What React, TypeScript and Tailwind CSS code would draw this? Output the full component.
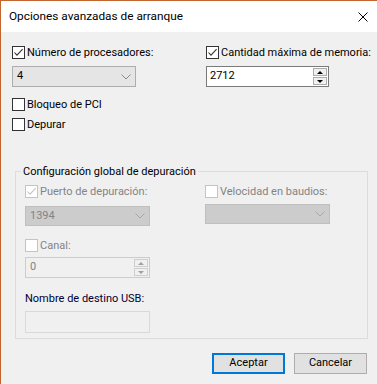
import React from 'react';

const font = { fontFamily: 'Roboto, "Liberation Sans", sans-serif' };

const Check: React.FC<{ checked?: boolean; disabled?: boolean }> = ({ checked, disabled }) => (
  <span
    className={`w-[13px] h-[13px] shrink-0 border bg-white flex items-center justify-center ${
      disabled ? 'border-[#c4c4c4]' : 'border-[#333333]'
    }`}
  >
    {checked && (
      <svg width="11" height="11" viewBox="0 0 11 11">
        <path d="M1.5 5.5 L4 8.2 L9.6 2.2" fill="none" stroke={disabled ? '#c4c4c4' : '#333333'} strokeWidth="1.1" />
      </svg>
    )}
  </span>
);

const CheckRow: React.FC<{ label: string; checked?: boolean; disabled?: boolean; className?: string }> = ({
  label,
  checked,
  disabled,
  className = ''
}) => (
  <div className={`flex items-center gap-[2px] h-[13px] ${className}`}>
    <Check checked={checked} disabled={disabled} />
    <span className={`text-[11px] leading-[13px] whitespace-nowrap ${disabled ? 'text-[#838383]' : 'text-black'}`}>{label}</span>
  </div>
);

const Chevron: React.FC<{ color: string }> = ({ color }) => (
  <svg width="10" height="6" viewBox="0 0 10 6">
    <path d="M0.5 0.5 L5 5 L9.5 0.5" fill="none" stroke={color} strokeWidth="1" />
  </svg>
);

const Spinner: React.FC<{ disabled?: boolean }> = ({ disabled }) => {
  const c = disabled ? '#a0a0a0' : '#000000';
  const b = disabled ? 'border-[#cfcfcf] bg-[#f0f0f0]' : 'border-[#acacac] bg-[#f0f0f0]';
  return (
    <div className="flex flex-col gap-[1px] py-[1px] pr-[1px]">
      <div className={`w-[14px] h-[8px] border ${b} flex items-center justify-center`}>
        <svg width="6" height="3" viewBox="0 0 6 3"><path d="M0 3 L3 0 L6 3 Z" fill={c} /></svg>
      </div>
      <div className={`w-[14px] h-[8px] border ${b} flex items-center justify-center`}>
        <svg width="6" height="3" viewBox="0 0 6 3"><path d="M0 0 L6 0 L3 3 Z" fill={c} /></svg>
      </div>
    </div>
  );
};

export default function App() {
  return (
    <div style={font} className="w-[377px] h-[384px] bg-[#f0f0f0] border-l border-t border-[#c4652f] flex flex-col overflow-hidden">
      <div className="h-[31px] bg-white flex items-center justify-between pl-[8px] pr-[9px] shrink-0">
        <span className="text-[11.8px] text-black">Opciones avanzadas de arranque</span>
        <svg width="10" height="10" viewBox="0 0 10 10">
          <path d="M0.5 0.5 L9.5 9.5 M9.5 0.5 L0.5 9.5" stroke="#000" strokeWidth="1" />
        </svg>
      </div>

      <div className="flex flex-col pl-[11px] pt-[14px]">
        <div className="flex">
          <div className="w-[194px] flex flex-col">
            <CheckRow label="Número de procesadores:" checked />
            <div className="mt-[7px] w-[124px] h-[21px] border border-[#adadad] bg-[#e5e5e5] flex items-center justify-between pl-[4px] pr-[4px]">
              <span className="text-[11px] text-black">4</span>
              <Chevron color="#8a8a8a" />
            </div>
          </div>
          <div className="flex flex-col">
            <CheckRow label="Cantidad máxima de memoria:" checked />
            <div className="mt-[7px] w-[123px] h-[21px] border border-[#7a7a7a] bg-white flex items-center justify-between pl-[3px]">
              <span className="text-[11px] text-black">2712</span>
              <Spinner />
            </div>
          </div>
        </div>

        <CheckRow label="Bloqueo de PCI" className="mt-[11px]" />
        <CheckRow label="Depurar" className="mt-[7px]" />

        <fieldset className="mt-[33px] ml-[3px] w-[353px] h-[175px] border border-[#dcdcdc] pl-[9px]">
          <legend className="ml-[-4px] px-[2px] text-[11px] leading-[15px] text-black">Configuración global de depuración</legend>
          <div className="flex mt-[6px]">
            <div className="w-[180px] flex flex-col">
              <CheckRow label="Puerto de depuración:" checked disabled />
              <div className="mt-[8px] w-[125px] h-[20px] border border-[#bfbfbf] bg-[#cccccc] flex items-center justify-between pl-[4px] pr-[4px]">
                <span className="text-[11px] text-[#838383]">1394</span>
                <Chevron color="#a8a8a8" />
              </div>
            </div>
            <div className="flex flex-col">
              <CheckRow label="Velocidad en baudios:" disabled />
              <div className="mt-[6px] w-[125px] h-[20px] border border-[#bfbfbf] bg-[#cccccc] flex items-center justify-end pr-[4px]">
                <Chevron color="#a8a8a8" />
              </div>
            </div>
          </div>

          <CheckRow label="Canal:" disabled className="mt-[13px]" />
          <div className="mt-[5px] w-[125px] h-[21px] border border-[#cccccc] bg-[#f0f0f0] flex items-center justify-between pl-[4px]">
            <span className="text-[11px] text-[#838383]">0</span>
            <Spinner disabled />
          </div>

          <div className="mt-[14px] text-[11px] leading-[13px] text-[#000033]">Nombre de destino USB:</div>
          <div className="mt-[6px] w-[125px] h-[22px] border border-[#d9d9d9] bg-[#f0f0f0]" />
        </fieldset>

        <div className="flex justify-end gap-[9px] mt-[14px] pr-[10px]">
          <button className="w-[73px] h-[21px] border-2 border-[#0078d7] bg-[#e1e1e1] text-[11px] text-black">Aceptar</button>
          <button className="w-[73px] h-[21px] border border-[#adadad] bg-[#e1e1e1] text-[11px] text-black">Cancelar</button>
        </div>
      </div>
    </div>
  );
}
